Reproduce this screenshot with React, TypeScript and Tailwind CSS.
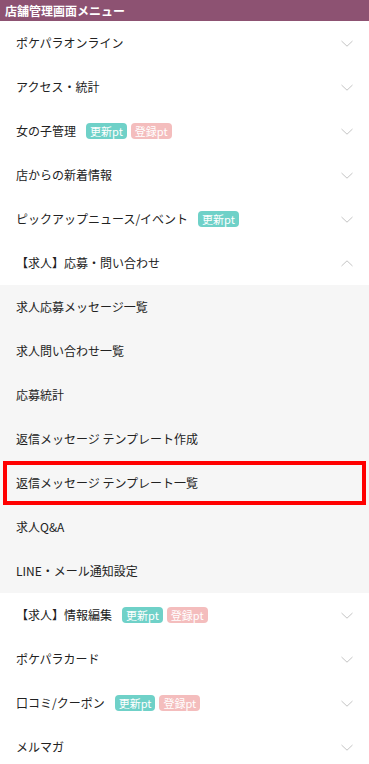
type Item = { label: string; update?: boolean; register?: boolean };

const topItems: Item[] = [
  { label: "ポケパラオンライン" },
  { label: "アクセス・統計" },
  { label: "女の子管理", update: true, register: true },
  { label: "店からの新着情報" },
  { label: "ピックアップニュース/イベント", update: true },
];

const subItems = [
  "求人応募メッセージ一覧",
  "求人問い合わせ一覧",
  "応募統計",
  "返信メッセージ テンプレート作成",
  "返信メッセージ テンプレート一覧",
  "求人Q&A",
  "LINE・メール通知設定",
];

const bottomItems: Item[] = [
  { label: "【求人】情報編集", update: true, register: true },
  { label: "ポケパラカード" },
  { label: "口コミ/クーポン", update: true, register: true },
  { label: "メルマガ" },
];

function Badges({ item }: { item: Item }) {
  return (
    <>
      {item.update && (
        <span className="ml-[10px] rounded-[4px] bg-[#6fd1c8] px-[4px] h-[16px] leading-[16px] text-[11px] text-white">
          更新pt
        </span>
      )}
      {item.register && (
        <span className="ml-[4px] rounded-[4px] bg-[#f4bdbd] px-[4px] h-[16px] leading-[16px] text-[11px] text-white">
          登録pt
        </span>
      )}
    </>
  );
}

function Chevron({ up }: { up?: boolean }) {
  return (
    <svg width="12" height="7" viewBox="0 0 12 7" fill="none" className="text-[#c4c4c4]">
      <path
        d={up ? "M0.5 6 L6 0.8 L11.5 6" : "M0.5 1 L6 6.2 L11.5 1"}
        stroke="currentColor"
        strokeWidth="1"
      />
    </svg>
  );
}

function Row({ item, open }: { item: Item; open?: boolean }) {
  return (
    <div className="flex h-[44px] items-center justify-between bg-white pl-[16px] pr-[16px]">
      <div className="flex items-center">
        <span>{item.label}</span>
        <Badges item={item} />
      </div>
      <Chevron up={open} />
    </div>
  );
}

export default function App() {
  return (
    <div
      className="w-[369px] bg-white text-[12px] text-[#222]"
      style={{ fontFamily: '"Noto Sans CJK JP", "Noto Sans", sans-serif' }}
    >
      <div className="flex h-[21px] items-center bg-[#8d5272] pl-[5px] text-[12px] font-bold text-white">
        店舗管理画面メニュー
      </div>
      {topItems.map((it) => (
        <Row key={it.label} item={it} />
      ))}
      <Row item={{ label: "【求人】応募・問い合わせ" }} open />
      <div className="bg-[#f6f6f6]">
        {subItems.map((s, i) => (
          <div key={s} className="relative flex h-[44px] items-center pl-[16px]">
            {s}
            {i === 4 && (
              <div className="pointer-events-none absolute inset-x-[3px] inset-y-0 border-[4px] border-[#ff0000]" />
            )}
          </div>
        ))}
      </div>
      {bottomItems.map((it) => (
        <Row key={it.label} item={it} />
      ))}
    </div>
  );
}
